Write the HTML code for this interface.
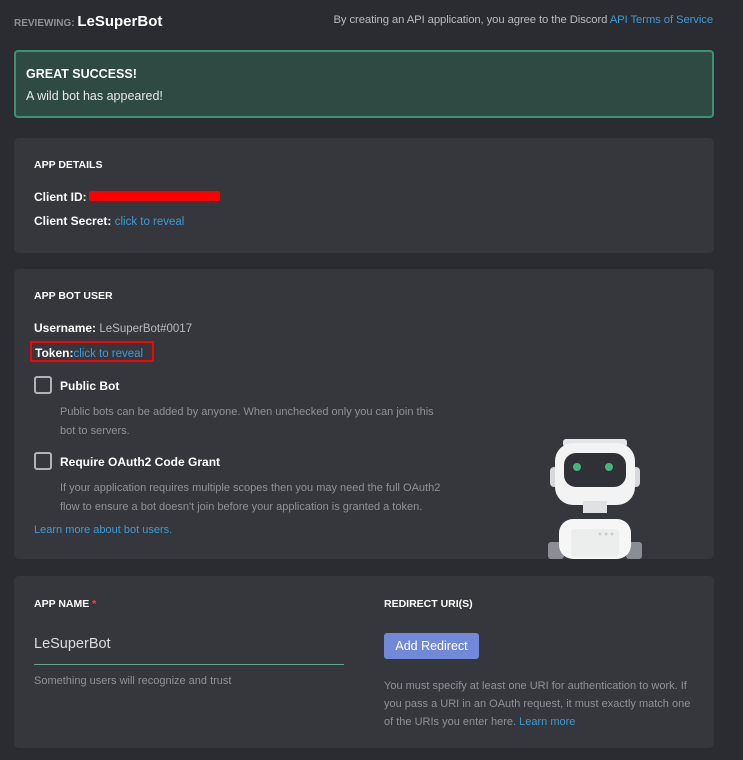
<!DOCTYPE html>
<html><head><style>
*{margin:0;padding:0;box-sizing:border-box}
body{width:743px;height:760px;background:#2a2c31;font-family:"Liberation Sans",sans-serif;color:#fff;position:relative;overflow:hidden}
.a{position:absolute;white-space:nowrap}
.card{position:absolute;left:14px;width:700px;background:#35373d;border-radius:5px}
.h{font-size:10.5px;font-weight:bold;color:#fff}
.b{font-size:12px;font-weight:bold;color:#fff}
.g{color:#8e9297;font-size:11px}
.l{color:#3c9bd6}
.cb{position:absolute;width:18px;height:18px;border:2px solid #b0b3b8;border-radius:3px}
</style></head><body>
<div class="a" style="left:14px;top:13px;font-size:15px;font-weight:bold"><span style="font-size:10px;color:#8e9297">REVIEWING: </span>LeSuperBot</div>
<div class="a" style="right:30px;top:14px;font-size:11.3px;color:#b9bbbe;letter-spacing:-0.1px">By creating an API application, you agree to the Discord <span class="l">API Terms of Service</span></div>
<div style="position:absolute;left:14px;top:50px;width:700px;height:68px;background:#2e4a42;border:2px solid #3f9170;border-radius:4px"></div>
<div class="a" style="left:26px;top:67px;font-size:12.5px;font-weight:bold">GREAT SUCCESS!</div>
<div class="a" style="left:26px;top:89px;font-size:12.5px;color:#e6e8ea">A wild bot has appeared!</div>

<div class="card" style="top:138px;height:115px"></div>
<div class="a h" style="left:34px;top:159px">APP DETAILS</div>
<div class="a b" style="left:34px;top:190px">Client ID:</div>
<div style="position:absolute;left:89px;top:191px;width:131px;height:10px;background:#f00;border-radius:2px"></div>
<div class="a b" style="left:34px;top:214px">Client Secret: <span class="l" style="font-weight:normal;font-size:11.5px">click to reveal</span></div>

<div class="card" style="top:269px;height:290px"></div>
<div class="a h" style="left:34px;top:290px">APP BOT USER</div>
<div class="a b" style="left:34px;top:321px">Username: <span style="font-weight:normal;font-size:11.5px;color:#b9bbbe">LeSuperBot#0017</span></div>
<div style="position:absolute;left:30px;top:341px;width:124px;height:21px;border:2px solid #f00"></div>
<div class="a b" style="left:35px;top:346px">Token:<span class="l" style="font-weight:normal;font-size:11.5px">click to reveal</span></div>
<div class="cb" style="left:34px;top:376px"></div>
<div class="a b" style="left:60px;top:379px">Public Bot</div>
<div class="a g" style="left:60px;top:403px;line-height:19px">Public bots can be added by anyone. When unchecked only you can join this<br>bot to servers.</div>
<div class="cb" style="left:34px;top:452px"></div>
<div class="a b" style="left:60px;top:455px">Require OAuth2 Code Grant</div>
<div class="a g" style="left:60px;top:479px;line-height:19px">If your application requires multiple scopes then you may need the full OAuth2<br>flow to ensure a bot doesn't join before your application is granted a token.</div>
<div class="a l" style="left:34px;top:524px;font-size:11px">Learn more about bot users.</div>
<svg style="position:absolute;left:540px;top:435px" width="110" height="124" viewBox="0 0 110 124">
<rect x="8" y="107" width="16" height="17" rx="3" fill="#8a8d93"/><rect x="86" y="107" width="16" height="17" rx="3" fill="#8a8d93"/>
<rect x="10" y="32" width="8" height="20" rx="4" fill="#d8d9db"/><rect x="92" y="32" width="8" height="20" rx="4" fill="#d8d9db"/>
<rect x="23" y="4" width="64" height="8" rx="3" fill="#e5e6e8"/>
<rect x="15" y="8" width="80" height="62" rx="18" fill="#f3f3f4"/>
<rect x="24" y="18" width="62" height="34" rx="12" fill="#2f3136"/>
<circle cx="37" cy="32" r="4" fill="#43b581"/><circle cx="69" cy="32" r="4" fill="#43b581"/>
<rect x="43" y="66" width="24" height="12" fill="#e0e1e3"/>
<rect x="19" y="84" width="72" height="40" rx="14" fill="#f6f6f7"/>
<rect x="31" y="94" width="48" height="28" rx="4" fill="#eceded"/>
<circle cx="60" cy="99" r="1.5" fill="#ccc"/><circle cx="66" cy="99" r="1.5" fill="#ccc"/><circle cx="72" cy="99" r="1.5" fill="#ccc"/>
</svg>

<div class="card" style="top:576px;height:172px"></div>
<div class="a h" style="left:34px;top:598px">APP NAME <span style="color:#f04747">*</span></div>
<div class="a h" style="left:384px;top:598px">REDIRECT URI(S)</div>
<div class="a" style="left:34px;top:636px;font-size:14.5px;color:#dcddde">LeSuperBot</div>
<div style="position:absolute;left:34px;top:664px;width:310px;height:1px;background:#5fa88a"></div>
<div class="a g" style="left:34px;top:675px">Something users will recognize and trust</div>
<div style="position:absolute;left:384px;top:633px;width:95px;height:26px;background:#7289da;border-radius:3px;color:#fff;font-size:12.5px;text-align:center;line-height:26px">Add Redirect</div>
<div class="a g" style="left:384px;top:677px;line-height:18px">You must specify at least one URI for authentication to work. If<br>you pass a URI in an OAuth request, it must exactly match one<br>of the URIs you enter here. <span class="l">Learn more</span></div>
</body></html>
